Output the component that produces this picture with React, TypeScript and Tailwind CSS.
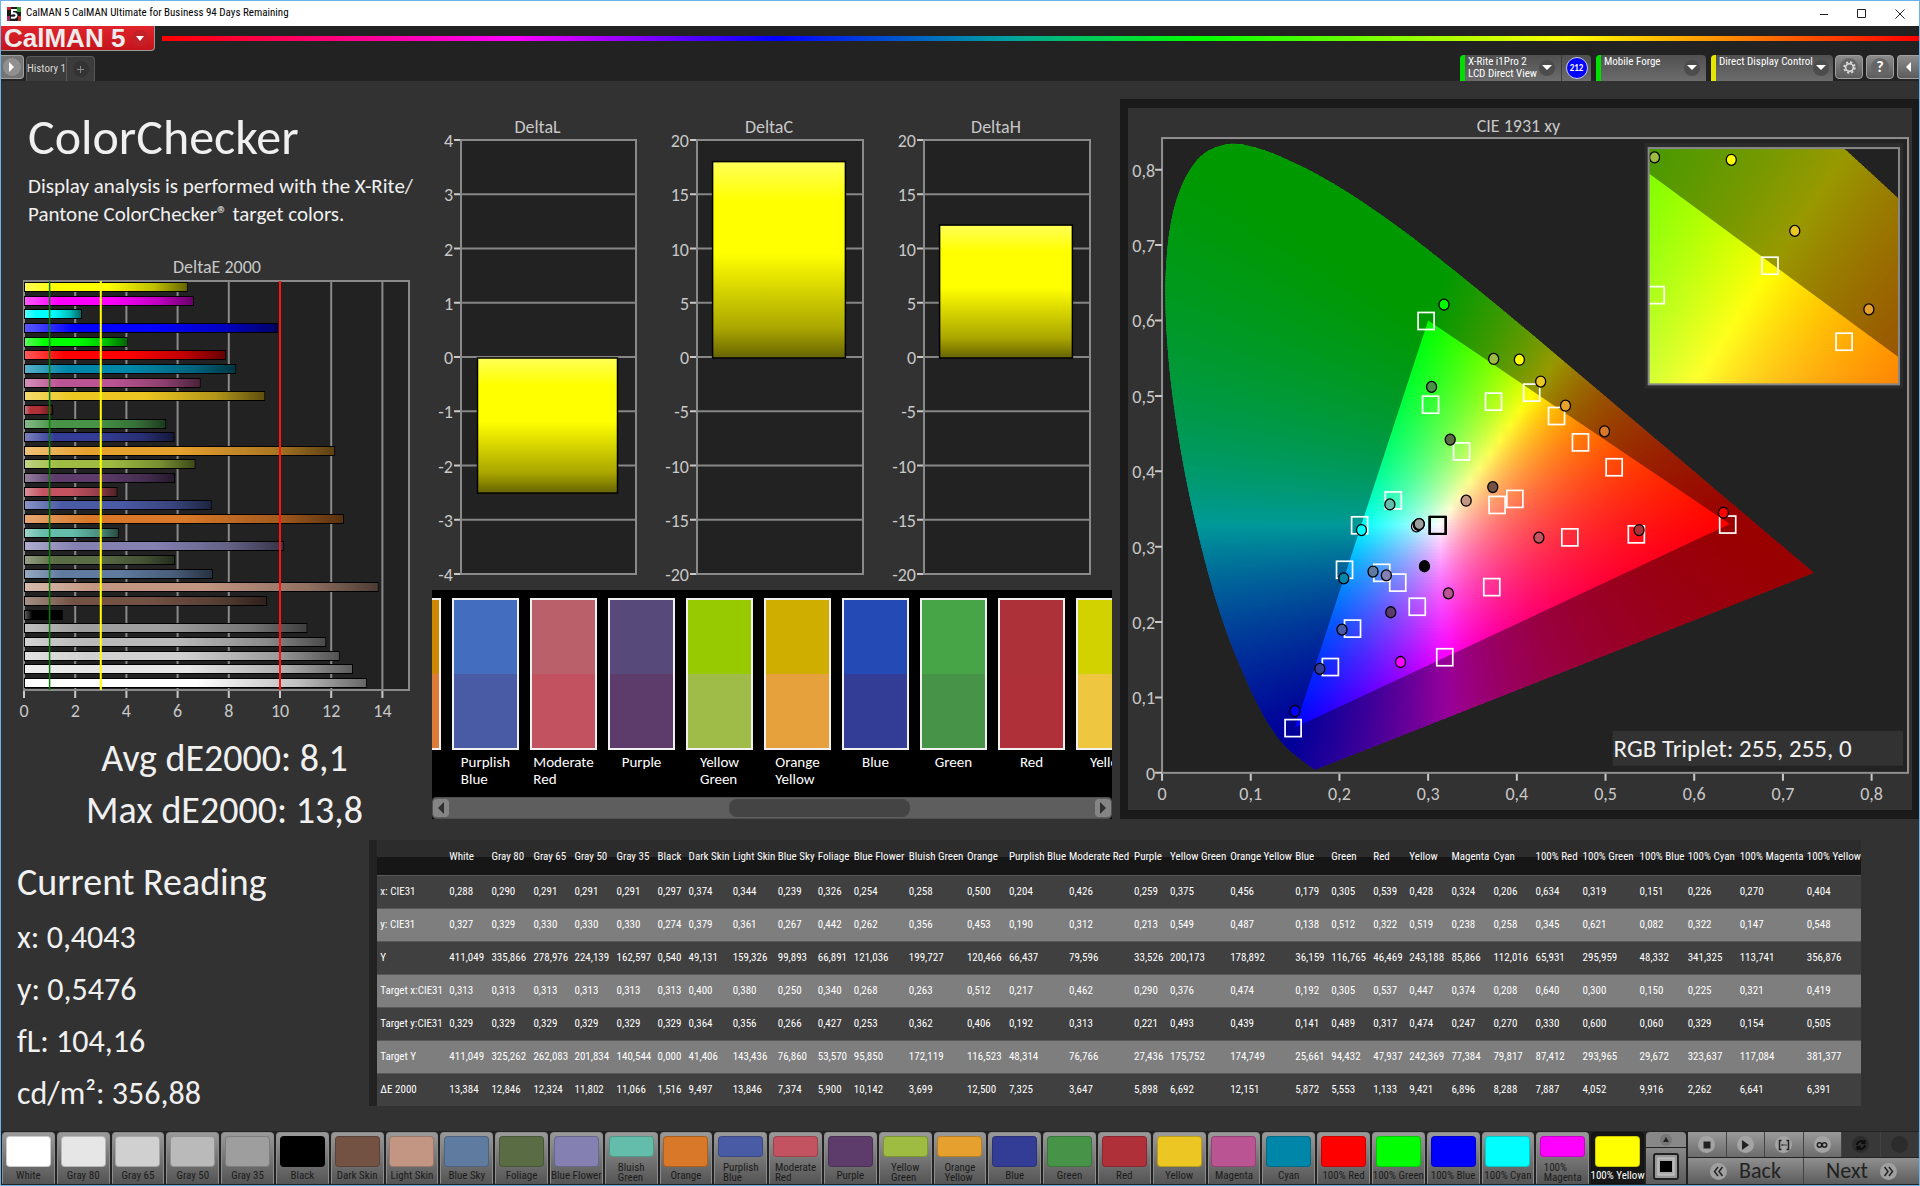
import React, { useState } from 'react';

type Patch = {
  name: string;
  color: string;
  x: string;
  y: string;
  lum: string;
  tx: string;
  ty: string;
  tlum: string;
  de: string;
  col: number;
};

const p = (name: string, color: string, col: number, values: string): Patch => {
  const [x, y, lum, tx, ty, tlum, de] = values.split(' ');
  return { name, color, col, x, y, lum, tx, ty, tlum, de };
};

const patches: Patch[] = [
  p('White', '#ffffff', 42, '0,288 0,327 411,049 0,313 0,329 411,049 13,384'),
  p('Gray 80', '#e6e6e6', 42, '0,290 0,329 335,866 0,313 0,329 325,262 12,846'),
  p('Gray 65', '#d0d0d0', 41, '0,291 0,330 278,976 0,313 0,329 262,083 12,324'),
  p('Gray 50', '#bababa', 42, '0,291 0,330 224,139 0,313 0,329 201,834 11,802'),
  p('Gray 35', '#9e9e9e', 41, '0,291 0,330 162,597 0,313 0,329 140,544 11,066'),
  p('Black', '#000000', 31, '0,297 0,274 0,540 0,313 0,329 0,000 1,516'),
  p('Dark Skin', '#735244', 44, '0,374 0,379 49,131 0,400 0,364 41,406 9,497'),
  p('Light Skin', '#c29682', 45, '0,344 0,361 159,326 0,380 0,356 143,436 13,846'),
  p('Blue Sky', '#5f7b9f', 40, '0,239 0,267 99,893 0,250 0,266 76,860 7,374'),
  p('Foliage', '#596c43', 36, '0,326 0,442 66,891 0,340 0,427 53,570 5,900'),
  p('Blue Flower', '#8480b1', 55, '0,254 0,262 121,036 0,268 0,253 95,850 10,142'),
  p('Bluish Green', '#64bdaa', 58, '0,258 0,356 199,727 0,263 0,362 172,119 3,699'),
  p('Orange', '#d87828', 42, '0,500 0,453 120,466 0,512 0,406 116,523 12,500'),
  p('Purplish Blue', '#4a5ba5', 60, '0,204 0,190 66,437 0,217 0,192 48,314 7,325'),
  p('Moderate Red', '#c35361', 65, '0,426 0,312 79,596 0,462 0,313 76,766 3,647'),
  p('Purple', '#5d3c6b', 36, '0,259 0,213 33,526 0,290 0,221 27,436 5,898'),
  p('Yellow Green', '#9ebc41', 60, '0,375 0,549 200,173 0,376 0,493 175,752 6,692'),
  p('Orange Yellow', '#e6a02e', 65, '0,456 0,487 178,892 0,474 0,439 174,749 12,151'),
  p('Blue', '#343d96', 36, '0,179 0,138 36,159 0,192 0,141 25,661 5,872'),
  p('Green', '#479449', 42, '0,305 0,512 116,765 0,305 0,489 94,432 5,553'),
  p('Red', '#af3039', 36, '0,539 0,322 46,469 0,537 0,317 47,937 1,133'),
  p('Yellow', '#ecc622', 42, '0,428 0,519 243,188 0,447 0,474 242,369 9,421'),
  p('Magenta', '#bb5493', 42, '0,324 0,238 85,866 0,374 0,247 77,384 6,896'),
  p('Cyan', '#0086a8', 42, '0,206 0,258 112,016 0,208 0,270 79,817 8,288'),
  p('100% Red', '#ff0000', 47, '0,634 0,345 65,931 0,640 0,330 87,412 7,887'),
  p('100% Green', '#00ff00', 57, '0,319 0,621 295,959 0,300 0,600 293,965 4,052'),
  p('100% Blue', '#0000ff', 48, '0,151 0,082 48,332 0,150 0,060 29,672 9,916'),
  p('100% Cyan', '#00ffff', 52, '0,226 0,322 341,325 0,225 0,329 323,637 2,262'),
  p('100% Magenta', '#ff00ff', 67, '0,270 0,147 113,741 0,321 0,154 117,084 6,641'),
  p('100% Yellow', '#ffff00', 57, '0,404 0,548 356,876 0,419 0,505 381,377 6,391'),
];

const rows: { label: string; key: keyof Patch }[] = [
  { label: 'x: CIE31', key: 'x' },
  { label: 'y: CIE31', key: 'y' },
  { label: 'Y', key: 'lum' },
  { label: 'Target x:CIE31', key: 'tx' },
  { label: 'Target y:CIE31', key: 'ty' },
  { label: 'Target Y', key: 'tlum' },
  { label: 'ΔE 2000', key: 'de' },
];

const swatches = [
  { name: 'Purplish Blue', top: '#436dbe', bottom: '#4a5ba5' },
  { name: 'Moderate Red', top: '#b9606a', bottom: '#c25260' },
  { name: 'Purple', top: '#58497b', bottom: '#5d3c6b' },
  { name: 'Yellow Green', top: '#97cb00', bottom: '#a0bc48' },
  { name: 'Orange Yellow', top: '#d0ae00', bottom: '#e6a03c' },
  { name: 'Blue', top: '#244bb5', bottom: '#343d96' },
  { name: 'Green', top: '#47a447', bottom: '#479449' },
  { name: 'Red', top: '#ad3139', bottom: '#af3039' },
];

const num = (s: string) => parseFloat(s.replace(',', '.'));
const tick = (n: number) => String(n).replace('.', ',');

/* ---------- CIE colour helpers ---------- */

const locus: [number, number][] = [
  [0.1741, 0.005], [0.1714, 0.0051], [0.1644, 0.0109], [0.1566, 0.0177], [0.144, 0.0297],
  [0.1355, 0.0399], [0.1241, 0.0578], [0.1096, 0.0868], [0.0913, 0.1327], [0.0687, 0.2007],
  [0.0454, 0.295], [0.0235, 0.4127], [0.0082, 0.5384], [0.0039, 0.6548], [0.0139, 0.7502],
  [0.0389, 0.812], [0.0743, 0.8338], [0.1142, 0.8262], [0.1547, 0.8059], [0.1929, 0.7816],
  [0.2296, 0.7543], [0.2658, 0.7243], [0.3016, 0.6923], [0.3731, 0.6245], [0.4441, 0.5547],
  [0.5125, 0.4866], [0.5752, 0.4242], [0.627, 0.3725], [0.6658, 0.334], [0.6915, 0.3083],
  [0.719, 0.2809], [0.7347, 0.2653],
];

const gamut: [number, number][] = [[0.64, 0.33], [0.3, 0.6], [0.15, 0.06]];

const xyColor = (x: number, y: number) => {
  const z = 1 - x - y;
  const rgb = [
    3.2406 * x - 1.5372 * y - 0.4986 * z,
    -0.9689 * x + 1.8758 * y + 0.0415 * z,
    0.0557 * x - 0.204 * y + 1.057 * z,
  ].map((c) => Math.max(0, c));
  const max = Math.max(...rgb, 0.0001);
  return `rgb(${rgb.map((c) => Math.round((c / max) * 255)).join(',')})`;
};

type View = { x0: number; x1: number; y0: number; y1: number; w: number; h: number };

const Gamut: React.FC<{ id: string; view: View }> = ({ id, view }) => {
  const { x0, x1, y0, y1, w, h } = view;
  const px = (x: number) => ((x - x0) / (x1 - x0)) * w;
  const py = (y: number) => h - ((y - y0) / (y1 - y0)) * h;
  const pts = locus.map(([x, y]) => [px(x), py(y)]);

  // Catmull-Rom through the locus points
  let outline = `M${pts[0][0]} ${pts[0][1]}`;
  for (let i = 0; i < pts.length - 1; i++) {
    const a = pts[Math.max(0, i - 1)];
    const b = pts[i];
    const c = pts[i + 1];
    const d = pts[Math.min(pts.length - 1, i + 2)];
    outline += `C${b[0] + (c[0] - a[0]) / 6} ${b[1] + (c[1] - a[1]) / 6} ${c[0] - (d[0] - b[0]) / 6} ${c[1] - (d[1] - b[1]) / 6} ${c[0]} ${c[1]}`;
  }
  outline += 'Z';
  const triangle = 'M' + gamut.map(([x, y]) => `${px(x)} ${py(y)}`).join('L') + 'Z';

  const left = Math.max(0, px(0));
  const right = Math.min(w, px(0.74));
  const xa = x0 + (left / w) * (x1 - x0);
  const xb = x0 + (right / w) * (x1 - x0);
  const stops = Math.round((right - left) / 10);
  const strips = Array.from({ length: Math.ceil(h / 3) }, (_, i) => i * 3);

  return (
    <g>
      <defs>
        <clipPath id={`${id}-locus`}><path d={outline} /></clipPath>
        <clipPath id={`${id}-frame`}><rect width={w} height={h} /></clipPath>
        {strips.map((s) => {
          const y = y1 - ((s + 1.5) / h) * (y1 - y0);
          return (
            <linearGradient key={s} id={`${id}-${s}`}>
              {Array.from({ length: stops + 1 }, (_, i) => (
                <stop key={i} offset={i / stops} stopColor={xyColor(xa + (i / stops) * (xb - xa), y)} />
              ))}
            </linearGradient>
          );
        })}
      </defs>
      <g clipPath={`url(#${id}-frame)`}>
        <g clipPath={`url(#${id}-locus)`}>
          {strips.map((s) => (
            <rect key={s} x={left} y={s} width={right - left} height="4" fill={`url(#${id}-${s})`} />
          ))}
          <path d={`M0 0H${w}V${h}H0Z${triangle}`} fillRule="evenodd" fill="#000" fillOpacity="0.4" />
        </g>
        {patches.map((m) => (
          <rect
            key={m.name}
            x={px(num(m.tx)) - 10}
            y={py(num(m.ty)) - 8}
            width="16"
            height="17"
            fill="none"
            stroke={m.tx === '0,313' ? '#000' : '#fff'}
            strokeWidth="1.7"
          />
        ))}
        {patches.map((m) => (
          <ellipse
            key={m.name}
            cx={px(num(m.x)) - 1}
            cy={py(num(m.y))}
            rx="5"
            ry="5.5"
            fill={m.color}
            stroke="#000"
            strokeWidth="1.3"
          />
        ))}
      </g>
    </g>
  );
};

const CieChart: React.FC = () => {
  const main: View = { x0: 0, x1: 0.841, y0: 0, y1: 0.842, w: 745, h: 634 };
  const inset: View = { x0: 0.3724, x1: 0.467, y0: 0.4564, y1: 0.5528, w: 250, h: 236 };
  return (
    <svg viewBox="0 0 783 701" className="block w-full text-lg" fill="#c8c8c8">
      <text x="390" y="24" textAnchor="middle">CIE 1931 xy</text>
      <g transform="translate(34 30)">
        <rect width="745" height="634" fill="#222" />
        <Gamut id="cie" view={main} />
        <rect width="745" height="634" fill="none" stroke="#909090" strokeWidth="2" />
        {Array.from({ length: 9 }, (_, i) => i / 10).map((v) => (
          <g key={v}>
            <path d={`M${(v / 0.841) * 745} 635v7M-7 ${634 - (v / 0.842) * 634}h7`} stroke="#c8c8c8" strokeWidth="2" />
            <text x={(v / 0.841) * 745} y="661" textAnchor="middle">{tick(v)}</text>
            <text x="-7" y={634 - (v / 0.842) * 634 + 7} textAnchor="end">{tick(v)}</text>
          </g>
        ))}
      </g>
      <rect x="516" y="35" width="258" height="245" fill="#2c2c2c" />
      <g transform="translate(520 40)">
        <rect width="250" height="236" fill="#222" />
        <Gamut id="inset" view={inset} />
        <rect width="250" height="236" fill="none" stroke="#888" strokeWidth="2" />
      </g>
      <rect x="484" y="622" width="290" height="35" fill="#323232" />
      <text x="485" y="648" className="text-[25px]" fill="#f0f0f0">RGB Triplet: 255, 255, 0</text>
    </svg>
  );
};

/* ---------- bar charts ---------- */

const DeltaEChart: React.FC = () => {
  const unit = 25.6;
  return (
    <svg viewBox="0 0 431 476" className="block w-full text-lg" fill="#c8c8c8">
      <defs>
        <linearGradient id="bar-shade">
          <stop offset="0" stopColor="#fff" stopOpacity="0.35" />
          <stop offset="0.2" stopColor="#fff" stopOpacity="0" />
          <stop offset="0.5" stopColor="#000" stopOpacity="0" />
          <stop offset="0.8" stopColor="#000" stopOpacity="0.25" />
          <stop offset="1" stopColor="#000" stopOpacity="0.6" />
        </linearGradient>
      </defs>
      <text x="216" y="23" textAnchor="middle">DeltaE 2000</text>
      <g transform="translate(23 31)">
        <rect width="385" height="409" fill="#222" />
        {[0, 2, 4, 6, 8, 10, 12, 14].map((v) => (
          <g key={v}>
            <path d={`M${v * unit} 0v409`} stroke="#8a8a8a" strokeWidth="2" />
            <path d={`M${v * unit} 409v8`} stroke="#c8c8c8" strokeWidth="2" />
            <text x={v * unit} y="436" textAnchor="middle">{v}</text>
          </g>
        ))}
        <rect width="385" height="409" fill="none" stroke="#8a8a8a" strokeWidth="2" />
        {[...patches].reverse().map((b, i) => (
          <g key={b.name} transform={`translate(1 ${1 + Math.round(i * 13.65)})`}>
            <rect x="-1" width={num(b.de) * unit} height="10" fill="#000" />
            <rect y="1" width={num(b.de) * unit - 2} height="8" fill={b.color} />
            <rect y="1" width={num(b.de) * unit - 2} height="8" fill="url(#bar-shade)" />
          </g>
        ))}
        <path d={`M${unit} 0v409`} stroke="#0a7a0a" strokeWidth="1.5" />
        <path d={`M${3 * unit} 0v409`} stroke="#ffff00" strokeWidth="2" />
        <path d={`M${10 * unit} 0v409`} stroke="#ff1414" strokeWidth="2" />
      </g>
    </svg>
  );
};

const DeltaChart: React.FC<{ title: string; x: number; width: number; max: number; value: number }> = ({
  title, x, width, max, value,
}) => {
  const h = 434;
  const mid = h / 2 + 1;
  const len = (Math.abs(value) / max) * (h / 2);
  const top = value < 0 ? mid : mid - len;
  return (
    <g transform={`translate(${x} 41)`}>
      <text x={width / 2 - 11} y="-7" textAnchor="middle">{title}</text>
      <rect width={width} height={h} fill="#222" />
      {Array.from({ length: 9 }, (_, i) => (
        <g key={i}>
          <path d={`M0 ${(i * h) / 8}h${width}`} stroke="#868686" strokeWidth="2" />
          <path d={`M-7 ${(i * h) / 8}h7`} stroke="#c8c8c8" strokeWidth="2" />
          <text x="-8" y={(i * h) / 8 + 7} textAnchor="end">{max - (i * max) / 4}</text>
        </g>
      ))}
      <rect width={width} height={h} fill="none" stroke="#8a8a8a" strokeWidth="2" />
      <rect x={width * 0.1 - 1} y={top} width={width * 0.8} height={len} fill="url(#yellow)" stroke="#000" strokeWidth="1.5" />
    </g>
  );
};

const DeltaCharts: React.FC = () => (
  <svg viewBox="0 0 680 491" className="block w-full text-lg" fill="#c8c8c8">
    <defs>
      <linearGradient id="yellow" x1="0" y1="0" x2="0" y2="1">
        <stop offset="0" stopColor="#ffff58" />
        <stop offset="0.2" stopColor="#ffff00" />
        <stop offset="0.47" stopColor="#ffff00" />
        <stop offset="0.85" stopColor="#aaa600" />
        <stop offset="1" stopColor="#666300" />
      </linearGradient>
    </defs>
    <DeltaChart title="DeltaL" x={29} width={175} max={4} value={-2.49} />
    <DeltaChart title="DeltaC" x={265} width={166} max={20} value={18.1} />
    <DeltaChart title="DeltaH" x={492} width={166} max={20} value={12.25} />
  </svg>
);

/* ---------- swatch strip ---------- */

const Swatch: React.FC<{ name: string; top: string; bottom: string }> = ({ name, top, bottom }) => (
  <div className="flex w-[67px] shrink-0 flex-col items-center">
    <div className="flex h-[152px] w-full flex-col border-2 border-[#f0f0f0]">
      <div className="h-[74px]" style={{ backgroundColor: top }} />
      <div className="flex-1" style={{ backgroundColor: bottom }} />
    </div>
    <div className="pt-1 text-[15px] leading-[17px] text-white">
      {name.split(' ').map((word) => <div key={word}>{word}</div>)}
    </div>
  </div>
);

const SwatchStrip: React.FC = () => (
  <div className="w-full bg-black">
    <div className="h-[207px] overflow-hidden pt-2">
      <div className="-ml-[58px] flex gap-[11px]">
        <div className="h-[152px] w-[67px] shrink-0 border-2 border-[#f0f0f0] bg-[linear-gradient(#cc8800_50%,#dc7c38_50%)]" />
        {swatches.map((s) => <Swatch key={s.name} {...s} />)}
        <Swatch name="Yellow" top="#d2d200" bottom="#eec640" />
      </div>
    </div>
    <div className="flex h-[22px] items-center justify-between rounded-sm border border-[#505050] bg-[#5e5e5e]">
      <button aria-label="Scroll left" className="flex h-[18px] w-4 items-center justify-center rounded bg-[#858585]">
        <svg width="8" height="12" viewBox="0 0 8 12"><path d="M7 0v12L1 6z" fill="#2e2e2e" /></svg>
      </button>
      <div className="flex flex-1 justify-start">
        <div className="w-[43.4%]" />
        <div className="h-[18px] w-[28%] rounded-lg bg-[#444]" />
      </div>
      <button aria-label="Scroll right" className="flex h-[18px] w-4 items-center justify-center rounded bg-[#858585]">
        <svg width="8" height="12" viewBox="0 0 8 12"><path d="M1 0v12l6-6z" fill="#2e2e2e" /></svg>
      </button>
    </div>
  </div>
);

/* ---------- window chrome ---------- */

const TitleBar: React.FC = () => (
  <header className="flex h-[25px] items-center bg-white pl-[6px] text-black">
    <svg width="14" height="14" viewBox="0 0 14 14" className="mr-[5px]">
      <rect width="14" height="14" fill="#1a1a1a" />
      <path d="M0 0h4v3H0z" fill="#d02020" />
      <path d="M10 0h4v5h-4z" fill="#30a030" />
      <path d="M0 9h3v5H0z" fill="#a02860" />
      <path d="M11 9h3v5h-3z" fill="#c03030" />
      <path d="M10 3H5v3.5c3-.8 4.500 .2 4.500 2S7 11.300 4 10.500" fill="none" stroke="#fff" strokeWidth="2" />
    </svg>
    <h1 className="flex-1 font-['Roboto_Condensed',sans-serif] text-[11px]">CalMAN 5 CalMAN Ultimate for Business 94 Days Remaining</h1>
    <button aria-label="Minimize" className="flex w-[38px] justify-center">
      <svg width="10" height="10" viewBox="0 0 10 10"><path d="M1 5.500h8" stroke="#222" /></svg>
    </button>
    <button aria-label="Maximize" className="flex w-[38px] justify-center">
      <svg width="10" height="10" viewBox="0 0 10 10"><path d="M.5 .5h8v8h-8z" fill="none" stroke="#222" /></svg>
    </button>
    <button aria-label="Close" className="flex w-[38px] justify-center">
      <svg width="10" height="10" viewBox="0 0 10 10"><path d="M.5 .5l9 9M9.500 .5l-9 9" stroke="#222" /></svg>
    </button>
  </header>
);

const Caret: React.FC = () => (
  <span className="flex size-4 shrink-0 items-center justify-center rounded-full bg-[#4c4c4c]">
    <svg width="10" height="6" viewBox="0 0 10 6"><path d="M0 0h10L5 5z" fill="#fff" /></svg>
  </span>
);

const Device: React.FC<{ lines: string[]; bar: string; width: string; badge?: string }> = ({ lines, bar, width, badge }) => (
  <div className={`flex h-[26px] rounded-t bg-linear-to-b from-[#505050] to-[#6c6c6c] ${width}`}>
    <div className={`w-[5px] shrink-0 rounded-tl ${bar}`} />
    <button className="flex min-w-0 flex-1 items-center justify-between pr-[6px] pl-[3px] text-left">
      <span className="self-start pt-[1px] font-['Roboto_Condensed',sans-serif] text-[11px] leading-[12px] text-white">
        {lines.map((l) => <span key={l} className="block whitespace-nowrap">{l}</span>)}
      </span>
      <Caret />
    </button>
    {badge && (
      <div className="flex w-[30px] items-center justify-center border-l border-[#3c3c3c]">
        <span className="flex size-[22px] shrink-0 items-center justify-center rounded-full border border-[#ccd] bg-[#0000ff] text-[9px] font-bold text-white">{badge}</span>
      </div>
    )}
  </div>
);

const ToolButton: React.FC<{ label: string; children: React.ReactNode }> = ({ label, children }) => (
  <button aria-label={label} className="flex h-[24px] w-[28px] items-center justify-center rounded border border-[#a0a0a0] bg-linear-to-b from-[#8c8c8c] to-[#5c5c5c]">
    <span className="flex size-[18px] items-center justify-center rounded-full bg-[#666]">{children}</span>
  </button>
);

const TopBar: React.FC = () => (
  <div className="bg-[#222]">
    <div className="flex h-[30px] items-start">
      <button className="flex h-[25px] w-[154px] items-center justify-between rounded-br border-r border-b border-[#999] bg-linear-to-b from-[#e0242c] to-[#c4141c] pr-[6px] pl-[3px]">
        <span className="font-['Liberation_Sans'] text-[26px] leading-6 font-bold whitespace-nowrap text-[#ececec]">CalMAN 5</span>
        <span className="flex size-4 shrink-0 items-center justify-center rounded-full bg-[#c42028]">
          <svg width="8" height="5" viewBox="0 0 8 5"><path d="M0 0h8L4 5z" fill="#fff" /></svg>
        </span>
      </button>
      <div className="mt-[10px] ml-[7px] h-[5px] flex-1 bg-[linear-gradient(to_right,#ff0000,#ff00ff_20%,#0000ff_35%,#00a0a0_48%,#00ff00_59%,#ffff00_80%,#ff8000_90%,#ff0000)]" />
    </div>
    <div className="flex h-[25px] items-end">
      <button aria-label="Show panel" className="mb-[2px] flex h-[24px] w-[23px] items-center justify-center rounded-r border border-l-0 border-[#a0a0a0] bg-[#757575]">
        <span className="flex size-[18px] items-center justify-center rounded-full bg-[#909090]">
          <svg width="6" height="10" viewBox="0 0 6 10"><path d="M0 0v10l5-5z" fill="#fff" /></svg>
        </span>
      </button>
      <div className="ml-[2px] flex h-[25px] rounded-t border border-b-0 border-[#585858] bg-[#3c3c3c]">
        <button className="w-[40px] flex-auto border-r border-[#585858] font-['Roboto_Condensed',sans-serif] text-[11px] whitespace-nowrap text-[#d8d8d8]">History 1</button>
        <button aria-label="Add history" className="flex w-[27px] items-center justify-center">
          <span className="flex size-4 items-center justify-center rounded-full bg-[#333]">
            <svg width="7" height="7" viewBox="0 0 7 7"><path d="M3.500 0v7M0 3.500h7" stroke="#888" /></svg>
          </span>
        </button>
      </div>
      <div className="flex-1" />
      <div className="flex gap-[5px]">
        <Device lines={['X-Rite i1Pro 2', 'LCD Direct View']} bar="bg-[#00e000]" width="w-[131px]" badge="212" />
        <Device lines={['Mobile Forge']} bar="bg-[#00e000]" width="w-[110px]" />
        <Device lines={['Direct Display Control']} bar="bg-[#e6e600]" width="w-[122px]" />
      </div>
      <div className="mb-[2px] ml-[2px] flex gap-[3px]">
        <ToolButton label="Settings">
          <svg width="13" height="13" viewBox="0 0 13 13">
            <circle cx="6.500" cy="6.500" r="5.300" fill="none" stroke="#ddd" strokeWidth="1.800" strokeDasharray="2.200 1.960" />
            <circle cx="6.500" cy="6.500" r="3.800" fill="none" stroke="#ddd" strokeWidth="1.500" />
          </svg>
        </ToolButton>
        <ToolButton label="Help"><span className="text-base leading-4 font-bold text-white">?</span></ToolButton>
        <button aria-label="Collapse" className="flex h-[24px] w-[22px] items-center justify-center rounded-l border border-r-0 border-[#a0a0a0] bg-linear-to-b from-[#8c8c8c] to-[#5c5c5c]">
          <svg width="6" height="10" viewBox="0 0 6 10"><path d="M5 0v10L0 5z" fill="#fff" /></svg>
        </button>
      </div>
    </div>
  </div>
);

/* ---------- readings ---------- */

const DataTable: React.FC = () => (
  <table className="w-full table-fixed border-l-8 border-[#222] font-['Roboto_Condensed','Open_Sans_Condensed',sans-serif] text-[11px] leading-[18px] whitespace-nowrap text-white">
    <colgroup>
      <col style={{ width: 73 }} />
      {patches.map((m) => <col key={m.name} style={{ width: m.col }} />)}
    </colgroup>
    <thead>
      <tr className="h-[35px] bg-[linear-gradient(#2c2c2c_50%,#161616_50%)]">
        <td />
        {patches.map((m) => <th key={m.name} scope="col" className="pl-[3px] text-left font-normal">{m.name}</th>)}
      </tr>
    </thead>
    <tbody>
      {rows.map((r) => (
        <tr key={r.key} className="h-[33px] border-t border-[#585858] bg-[#404040] even:bg-[#7e7e7e]">
          <th scope="row" className="pl-[3px] text-left font-normal">{r.label}</th>
          {patches.map((m) => <td key={m.name} className="pl-[3px]">{m[r.key]}</td>)}
        </tr>
      ))}
    </tbody>
  </table>
);

const Readings: React.FC = () => (
  <div className="w-[19.8%] shrink-0 pt-4 pl-4 text-[32px] leading-[52px] text-[#f0f0f0]">
    <h3 className="mb-1 text-[38px] leading-[52px]">Current Reading</h3>
    <p>x: 0,4043</p>
    <p>y: 0,5476</p>
    <p>fL: 104,16</p>
    <p>cd/m²: 356,88</p>
  </div>
);

/* ---------- bottom bar ---------- */

const PatchButton: React.FC<{ patch: Patch; active: boolean; onClick: () => void }> = ({ patch, active, onClick }) => {
  const wraps = patch.name.length > 11;
  return (
    <button
      onClick={onClick}
      aria-pressed={active}
      className={`flex h-[52px] min-w-0 flex-1 flex-col items-center justify-between rounded-t-sm border pt-[3px] ${active ? 'border-[#111] bg-[#161616] text-white' : 'border-[#8c8c8c] border-b-[#555] bg-linear-to-b from-[#9a9a9a] to-[#555] text-[#1c1c1c]'}`}
    >
      <span className={`w-[45px] rounded-sm border border-black/20 ${wraps ? 'h-[21px]' : 'h-[31px]'}`} style={{ backgroundColor: patch.color }} />
      <span className={`text-left font-['Roboto_Condensed'] text-[11px] ${wraps ? 'leading-[10px]' : 'leading-[14px]'} whitespace-nowrap`}>
        {wraps ? patch.name.split(' ').map((w) => <span key={w} className="block">{w}</span>) : patch.name}
      </span>
    </button>
  );
};

const MediaButton: React.FC<{ label: string; dark?: boolean; children?: React.ReactNode }> = ({ label, dark, children }) => (
  <button aria-label={label} className={`flex flex-1 items-center justify-center border-r border-[#444] ${dark ? 'bg-[#383838]' : 'bg-linear-to-b from-[#9a9a9a] to-[#6c6c6c]'}`}>
    <span className={`flex size-[17px] items-center justify-center rounded-full ${dark ? 'bg-[#2c2c2c]' : 'bg-[#a4a4a4]'}`}>
      <svg width="12" height="12" viewBox="0 0 12 12" fill="none" stroke="#222" strokeWidth="1.500">{children}</svg>
    </span>
  </button>
);

const BottomBar: React.FC = () => {
  const [active, setActive] = useState('100% Yellow');
  return (
    <footer className="flex h-[54px] gap-[2px] bg-[#222] pt-[1px] pb-[1px]">
      <div className="flex min-w-0 flex-1 gap-[2px] pl-[1px]">
        {patches.map((m) => (
          <PatchButton key={m.name} patch={m} active={m.name === active} onClick={() => setActive(m.name)} />
        ))}
      </div>
      <div className="flex w-[40px] flex-col gap-[1px]">
        <button aria-label="Expand" className="flex h-[15px] items-center justify-center rounded-t-sm bg-[#888]">
          <span className="flex size-3 items-center justify-center rounded-full bg-[#777]">
            <svg width="6" height="5" viewBox="0 0 6 5"><path d="M0 5h6L3 0z" fill="#222" /></svg>
          </span>
        </button>
        <button aria-label="Pattern window" className="flex flex-1 items-center justify-center bg-linear-to-b from-[#888] to-[#5c5c5c]">
          <svg width="26" height="27" viewBox="0 0 26 27">
            <rect x="1" y="1" width="24" height="25" rx="2" fill="#999" stroke="#222" strokeWidth="2" />
            <rect x="5" y="5" width="16" height="17" fill="#aaa" stroke="#ccc" />
            <rect x="7" y="8" width="12" height="11" fill="#000" />
          </svg>
        </button>
      </div>
      <div className="flex w-[231px] flex-col gap-[1px]">
        <div className="flex h-[25px]">
          <MediaButton label="Stop"><path d="M2.500 2.500h7v7h-7z" fill="#222" stroke="none" /></MediaButton>
          <MediaButton label="Play"><path d="M3 1v10l7-5z" fill="#222" stroke="none" /></MediaButton>
          <MediaButton label="Read series"><path d="M3.500 1.500h-2v9h2M8.500 1.500h2v9h-2M3.500 6h1.500M5.500 6h1M7.500 6h1" /></MediaButton>
          <MediaButton label="Read continuous"><circle cx="3.500" cy="6" r="2.200" /><circle cx="8.500" cy="6" r="2.200" /></MediaButton>
          <MediaButton label="Refresh" dark><path d="M2 6a4 4 0 0 1 7-2.500M10 6a4 4 0 0 1-7 2.500M9.500 1v3h-3M2.500 11V8h3" stroke="#0c0c0c" strokeWidth="2" /></MediaButton>
          <MediaButton label="Record" dark />
        </div>
        <div className="flex flex-1 text-[22px] leading-6 text-[#222]">
          <button className="flex flex-1 items-center justify-center gap-3 border-r border-[#444] bg-linear-to-b from-[#909090] to-[#5c5c5c]">
            <span className="flex size-[17px] items-center justify-center rounded-full bg-[#a0a0a0]">
              <svg width="11" height="11" viewBox="0 0 11 11" fill="none" stroke="#222" strokeWidth="1.500"><path d="M5 1L1.500 5.500L5 10M9.500 1L6 5.500L9.500 10" /></svg>
            </span>
            Back
          </button>
          <button className="flex flex-1 items-center justify-center gap-3 bg-linear-to-b from-[#909090] to-[#5c5c5c]">
            Next
            <span className="flex size-[17px] items-center justify-center rounded-full bg-[#a0a0a0]">
              <svg width="11" height="11" viewBox="0 0 11 11" fill="none" stroke="#222" strokeWidth="1.500"><path d="M1.500 1L5 5.500L1.500 10M6 1l3.500 4.500L6 10" /></svg>
            </span>
          </button>
        </div>
      </div>
    </footer>
  );
};

export default function App() {
  return (
    <div className="flex min-h-screen flex-col border border-[#6cb4e8] bg-[#323232] font-[Carlito,Lato,'Liberation_Sans',sans-serif]">
      <TitleBar />
      <TopBar />
      <main className="flex flex-1 flex-col pt-[18px]">
        <div className="grid grid-cols-[minmax(0,431fr)_minmax(0,680fr)_minmax(0,807fr)] pb-1">
          <section>
            <div className="pt-2 pl-[27px] text-[#f0f0f0]">
              <h2 className="text-[50px] leading-[60px]">ColorChecker</h2>
              <p className="pt-[5px] text-[21px] leading-7">
                Display analysis is performed with the X-Rite/<br />Pantone ColorChecker® target colors.
              </p>
            </div>
            <div className="mt-[22px]"><DeltaEChart /></div>
            <div className="pt-1.5 text-center text-[38px] leading-[52px] text-[#f0f0f0]">
              <p className="pl-4">Avg dE2000: 8,1</p>
              <p className="pl-4">Max dE2000: 13,8</p>
            </div>
          </section>
          <section>
            <DeltaCharts />
            <SwatchStrip />
          </section>
          <section className="ml-2 self-start bg-[#1a1a1a] pt-[9px] pr-[7px] pb-[9px] pl-2">
            <div className="bg-[#323232]"><CieChart /></div>
          </section>
        </div>
        <div className="flex pr-[58px]">
          <Readings />
          <div className="min-w-0 flex-1"><DataTable /></div>
        </div>
      </main>
      <BottomBar />
    </div>
  );
}
